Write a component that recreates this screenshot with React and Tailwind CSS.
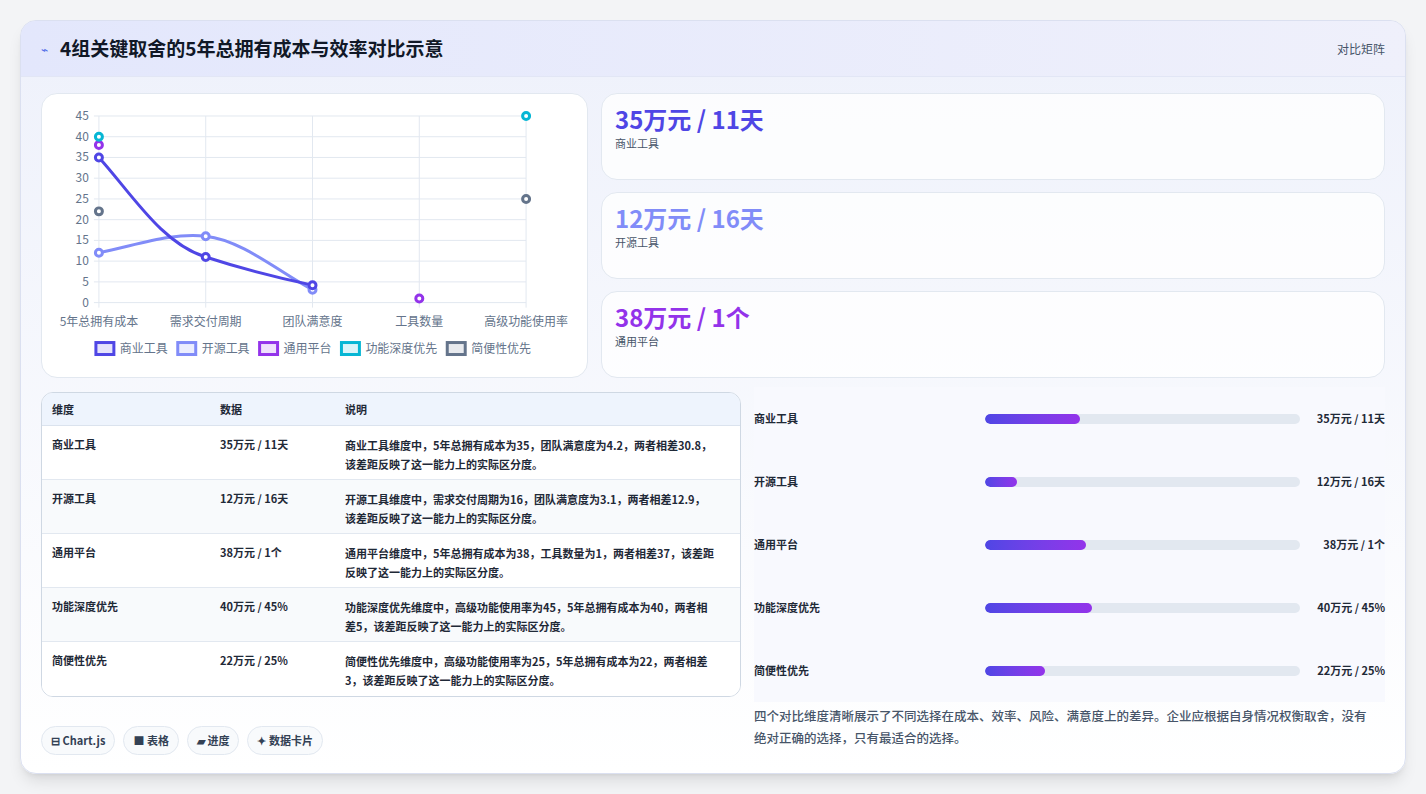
import React from "react";

const font = { fontFamily: '"Noto Sans CJK SC", "Noto Sans", sans-serif' };

const rows = [
  { name: "商业工具", data: "35万元 / 11天", desc: "商业工具维度中，5年总拥有成本为35，团队满意度为4.2，两者相差30.8，该差距反映了这一能力上的实际区分度。", pct: 30 },
  { name: "开源工具", data: "12万元 / 16天", desc: "开源工具维度中，需求交付周期为16，团队满意度为3.1，两者相差12.9，该差距反映了这一能力上的实际区分度。", pct: 10 },
  { name: "通用平台", data: "38万元 / 1个", desc: "通用平台维度中，5年总拥有成本为38，工具数量为1，两者相差37，该差距反映了这一能力上的实际区分度。", pct: 32 },
  { name: "功能深度优先", data: "40万元 / 45%", desc: "功能深度优先维度中，高级功能使用率为45，5年总拥有成本为40，两者相差5，该差距反映了这一能力上的实际区分度。", pct: 34 },
  { name: "简便性优先", data: "22万元 / 25%", desc: "简便性优先维度中，高级功能使用率为25，5年总拥有成本为22，两者相差3，该差距反映了这一能力上的实际区分度。", pct: 19 },
];

const cards = [
  { v: "35万元 / 11天", l: "商业工具", c: "text-[#4f46e5]" },
  { v: "12万元 / 16天", l: "开源工具", c: "text-[#818cf8]" },
  { v: "38万元 / 1个", l: "通用平台", c: "text-[#9333ea]" },
];

const y = (v) => 209 - v * 4.155;
const X = [57, 164, 271, 378, 485];
const cats = ["5年总拥有成本", "需求交付周期", "团队满意度", "工具数量", "高级功能使用率"];
const legend = [
  ["商业工具", "#4f46e5", 54],
  ["开源工具", "#818cf8", 136],
  ["通用平台", "#9333ea", 218],
  ["功能深度优先", "#06b6d4", 300],
  ["简便性优先", "#64748b", 406],
];

function Dot({ x, v, c }) {
  return <circle cx={x} cy={y(v)} r="3.5" fill="#fff" stroke={c} strokeWidth="3" />;
}

function Chart() {
  return (
    <svg viewBox="0 0 546 284" className="w-full h-full">
      {[0, 5, 10, 15, 20, 25, 30, 35, 40, 45].map((t) => (
        <g key={t}>
          <line x1="52" x2="485" y1={y(t)} y2={y(t)} stroke="#e2e8f0" />
          <text x="47" y={y(t) + 4} textAnchor="end" fontSize="12" fill="#64748b" style={font}>{t}</text>
        </g>
      ))}
      {X.map((x, i) => (
        <g key={i}>
          <line x1={x} x2={x} y1="22" y2="214" stroke="#e2e8f0" />
          <text x={x} y="232" textAnchor="middle" fontSize="12" fill="#64748b" style={font}>{cats[i]}</text>
        </g>
      ))}
      <path d="M57,159.1 C100,150 130,139 164,142.5 C200,146 240,180 271,196.1" fill="none" stroke="#818cf8" strokeWidth="3" />
      <path d="M57,63.6 C90,100 120,150 164,163.3 C200,175 240,185 271,191.5" fill="none" stroke="#4f46e5" strokeWidth="3" />
      <Dot x={57} v={12} c="#818cf8" />
      <Dot x={164} v={16} c="#818cf8" />
      <Dot x={271} v={3.1} c="#818cf8" />
      <Dot x={57} v={35} c="#4f46e5" />
      <Dot x={164} v={11} c="#4f46e5" />
      <Dot x={271} v={4.2} c="#4f46e5" />
      <Dot x={57} v={38} c="#9333ea" />
      <Dot x={378} v={1} c="#9333ea" />
      <Dot x={57} v={40} c="#06b6d4" />
      <Dot x={485} v={45} c="#06b6d4" />
      <Dot x={57} v={22} c="#64748b" />
      <Dot x={485} v={25} c="#64748b" />
      {legend.map(([n, c, x]) => (
        <g key={n}>
          <rect x={x} y="249" width="18" height="12" fill={c} fillOpacity="0.15" stroke={c} strokeWidth="3" />
          <text x={x + 24} y="259" fontSize="12" fill="#64748b" style={font}>{n}</text>
        </g>
      ))}
    </svg>
  );
}

export default function App() {
  return (
    <div className="w-full h-[794px] bg-[#f3f4f6] pt-[20px] px-[20px]" style={font}>
      <div className="w-[1386px] h-[754px] rounded-2xl border border-[#dbe0f0] bg-gradient-to-b from-[#eef1fb] to-white shadow-lg overflow-hidden flex flex-col">
        <div className="h-[56px] shrink-0 flex items-center justify-between px-5 bg-gradient-to-r from-[#e3e7fc] to-[#eff0fb] border-b border-[#e2e6f5]">
          <div className="flex items-center gap-3">
            <span className="text-[#4f6be8] text-[12px]">⌁</span>
            <span className="text-[19px] font-bold text-[#111827]">4组关键取舍的5年总拥有成本与效率对比示意</span>
          </div>
          <span className="text-[12px] text-[#475569]">对比矩阵</span>
        </div>
        <div className="flex-1 px-5 pt-[16px] flex flex-col">
          <div className="grid grid-cols-[547px_1fr] gap-[13px] h-[285px]">
            <div className="bg-white rounded-2xl border border-[#e2e8f0]">
              <Chart />
            </div>
            <div className="flex flex-col gap-[12px]">
              {cards.map((c) => (
                <div key={c.l} className="flex-1 bg-white/80 rounded-2xl border border-[#e2e8f0] px-[13px] pt-[9px]">
                  <div className={"text-[24px] font-bold leading-[32px] " + c.c}>{c.v}</div>
                  <div className="text-[11px] text-[#475569]">{c.l}</div>
                </div>
              ))}
            </div>
          </div>
          <div className="grid grid-cols-[700px_1fr] gap-[13px] mt-[14px]">
            <div>
              <div className="rounded-xl border border-[#cfd8e3] overflow-hidden bg-white text-[11px] text-[#1f2937]">
                <div className="grid grid-cols-[168px_125px_1fr] h-[33px] items-center bg-[#eef4fd] border-b border-[#dbe3ee] px-[10px] font-semibold">
                  <span>维度</span><span>数据</span><span>说明</span>
                </div>
                {rows.map((r, i) => (
                  <div key={r.name} className={"grid grid-cols-[168px_125px_1fr] h-[54px] px-[10px] pt-[10px] " + (i < 4 ? "border-b border-[#e2e8f0] " : "") + (i % 2 ? "bg-[#f8fafc]" : "bg-white")}>
                    <span className="font-semibold">{r.name}</span>
                    <span className="font-semibold">{r.data}</span>
                    <span className="font-semibold leading-[19px] pr-[14px]">{r.desc}</span>
                  </div>
                ))}
              </div>
              <div className="flex gap-2 mt-[29px]">
                {["⊟ Chart.js", "■ 表格", "▰ 进度", "✦ 数据卡片"].map((t) => (
                  <span key={t} className="h-[29px] px-[9px] flex items-center rounded-full border border-[#e2e8f0] bg-[#f8fafc] text-[11px] font-semibold text-[#334155]">{t}</span>
                ))}
              </div>
            </div>
            <div className="flex flex-col -mt-[5px]">
              <div className="flex flex-col bg-[#f8f9fe]">
                {rows.map((r) => (
                  <div key={r.name} className="h-[63px] flex items-center">
                    <span className="w-[231px] text-[11px] font-semibold text-[#1f2937]">{r.name}</span>
                    <div className="flex-1 h-[10px] rounded-full bg-[#e2e8f0] overflow-hidden">
                      <div className="h-full rounded-full bg-gradient-to-r from-[#4f46e5] to-[#9333ea]" style={{ width: r.pct + "%" }} />
                    </div>
                    <span className="w-[85px] text-right text-[11px] font-bold text-[#1f2937]">{r.data}</span>
                  </div>
                ))}
              </div>
              <p className="mt-[3px] pr-[8px] text-[12.5px] leading-[22px] text-[#475569] font-medium">四个对比维度清晰展示了不同选择在成本、效率、风险、满意度上的差异。企业应根据自身情况权衡取舍，没有绝对正确的选择，只有最适合的选择。</p>
            </div>
          </div>
        </div>
      </div>
    </div>
  );
}
